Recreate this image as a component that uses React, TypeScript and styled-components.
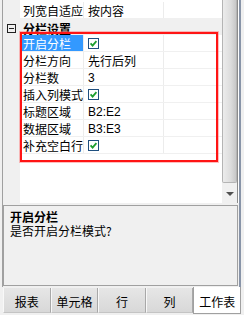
import React from 'react';
import styled, { createGlobalStyle } from 'styled-components';

const GlobalStyle = createGlobalStyle`
  html, body {
    margin: 0;
    padding: 0;
    background: #f0f0f0;
  }
  body {
    font-family: "Noto Sans CJK SC", "Liberation Sans", sans-serif;
    font-size: 12px;
    color: #000;
  }
`;

const Frame = styled.div`
  width: 244px;
  height: 315px;
  display: flex;
  flex-direction: column;
  overflow: hidden;
  background: #f0f0f0;
`;

const Panel = styled.div`
  margin-left: 2px;
  width: 239px;
  height: 287px;
  box-sizing: border-box;
  border-left: 1px solid #a0a0a0;
  border-right: 2px solid #8894a8;
  display: flex;
  flex-direction: column;
`;

const GridArea = styled.div`
  height: 203px;
  display: flex;
  background: #fff;
`;

const GridBody = styled.div`
  flex: 1;
  position: relative;
  overflow: hidden;
  padding-top: 2px;
  background: linear-gradient(to right, #f0f0f0 17px, #fff 17px);
`;

const Row = styled.div`
  display: flex;
  height: 17px;
  box-sizing: border-box;
  border-bottom: 1px solid #f0f0f0;
`;

const GroupRow = styled.div`
  display: flex;
  align-items: flex-start;
  height: 16px;
  background: #f0f0f0;
`;

const Expander = styled.span`
  position: relative;
  margin: 5px 4px 0 4px;
  width: 9px;
  height: 9px;
  box-sizing: border-box;
  border: 1px solid #222;
  &::after {
    content: '';
    position: absolute;
    left: 1px;
    top: 3px;
    width: 5px;
    height: 1px;
    background: #222;
  }
`;

const GroupTitle = styled.span`
  padding: 3px 0 0 3px;
  line-height: 13px;
  font-weight: bold;
`;

const Margin = styled.div`
  width: 17px;
  flex: none;
`;

const NameCell = styled.div<{ $selected?: boolean }>`
  width: 64px;
  flex: none;
  box-sizing: border-box;
  padding: 2px 0 0 3px;
  line-height: 14px;
  border-right: 1px solid #ececec;
  white-space: nowrap;
  overflow: hidden;
  background: ${(p) => (p.$selected ? '#3399ff' : 'transparent')};
  color: ${(p) => (p.$selected ? '#fff' : '#000')};
`;

const ValueCell = styled.div`
  width: 80px;
  flex: none;
  box-sizing: border-box;
  padding: 2px 0 0 4px;
  line-height: 14px;
  border-right: 1px solid #ececec;
  display: flex;
  align-items: flex-start;
  white-space: nowrap;
  font-family: "Liberation Sans", "Noto Sans CJK SC", sans-serif;
`;

const CjkText = styled.span`
  font-family: "Noto Sans CJK SC", sans-serif;
`;

const EmptyCell = styled.div`
  flex: 1;
`;

const Highlight = styled.div`
  position: absolute;
  left: 17px;
  top: 32px;
  width: 198px;
  height: 130px;
  box-sizing: border-box;
  border: 2px solid #ff1414;
  box-shadow: 0 0 0 1px rgba(255, 110, 110, 0.45);
  pointer-events: none;
`;

const ScrollCol = styled.div`
  width: 17px;
  flex: none;
  display: flex;
  flex-direction: column;
  padding-right: 1px;
  box-sizing: border-box;
  background: #fff;
`;

const ScrollTrack = styled.div`
  flex: 1;
  display: flex;
  flex-direction: column;
  background: #f0f0f0;
  border-right: 1px solid #8c8c8c;
`;

const Thumb = styled.div`
  height: 183px;
  box-sizing: border-box;
  border: 1px solid #b4b4b4;
  border-top: none;
  border-radius: 0 0 2px 2px;
  background: linear-gradient(to right, #ececec, #dcdcdc 60%, #c8c8c8);
`;

const ArrowButton = styled.div`
  margin-top: 3px;
  height: 17px;
  display: flex;
  align-items: center;
  justify-content: center;
`;

const Description = styled.div`
  margin: 2px 1px 0 0;
  height: 81px;
  box-sizing: border-box;
  border: 1px solid #a0a0a0;
  background: #f0f0f0;
  padding: 4px 0 0 6px;
  line-height: 14px;
`;

const DescTitle = styled.div`
  font-weight: bold;
`;

const TabStrip = styled.div`
  display: flex;
  margin-left: 3px;
  width: 238px;
  height: 28px;
`;

const Tab = styled.div<{ $active?: boolean }>`
  flex: 1;
  box-sizing: border-box;
  display: flex;
  align-items: center;
  justify-content: center;
  padding-top: 2px;
  margin-top: ${(p) => (p.$active ? '0' : '1px')};
  height: ${(p) => (p.$active ? '27px' : '25px')};
  background: ${(p) => (p.$active ? '#fff' : 'linear-gradient(#e6e6e6, #d8d8d8)')};
  border-left: 1px solid ${(p) => (p.$active ? '#a0a0a0' : '#f8f8f8')};
  border-right: 1px solid ${(p) => (p.$active ? '#a0a0a0' : '#a8a8a8')};
  border-bottom: 1px solid ${(p) => (p.$active ? '#a0a0a0' : '#c4c4c4')};
  font-size: 12px;
`;

function CheckBox() {
  return (
    <svg width="11" height="11" viewBox="0 0 11 11" style={{ marginTop: 1 }}>
      <rect x="0.5" y="0.5" width="10" height="10" fill="#fff" stroke="#1f4f7f" />
      <path d="M2.6 5.4 L4.6 7.6 L8.4 3.2" fill="none" stroke="#1e9e2e" strokeWidth="1.8" />
    </svg>
  );
}

type Prop = { name: string; value?: string; check?: boolean; selected?: boolean; cjk?: boolean };

const props: Prop[] = [
  { name: '开启分栏', check: true, selected: true },
  { name: '分栏方向', value: '先行后列', cjk: true },
  { name: '分栏数', value: '3' },
  { name: '插入列模式', check: true },
  { name: '标题区域', value: 'B2:E2' },
  { name: '数据区域', value: 'B3:E3' },
  { name: '补充空白行', check: true },
];

const tabs = ['报表', '单元格', '行', '列', '工作表'];

export default function App() {
  return (
    <Frame>
      <GlobalStyle />
      <Panel>
        <GridArea>
          <GridBody>
            <Row>
              <Margin />
              <NameCell>列宽自适应</NameCell>
              <ValueCell><CjkText>按内容</CjkText></ValueCell>
              <EmptyCell />
            </Row>
            <GroupRow>
              <Expander />
              <GroupTitle>分栏设置</GroupTitle>
            </GroupRow>
            {props.map((p) => (
              <Row key={p.name}>
                <Margin />
                <NameCell $selected={p.selected}>{p.name}</NameCell>
                <ValueCell>
                  {p.check ? <CheckBox /> : p.cjk ? <CjkText>{p.value}</CjkText> : p.value}
                </ValueCell>
                <EmptyCell />
              </Row>
            ))}
            <Highlight />
          </GridBody>
          <ScrollCol>
            <ScrollTrack>
              <Thumb />
              <ArrowButton>
                <svg width="8" height="5" viewBox="0 0 8 5">
                  <path d="M0 0 H8 L4 4 Z" fill="#505050" />
                </svg>
              </ArrowButton>
            </ScrollTrack>
          </ScrollCol>
        </GridArea>
        <Description>
          <DescTitle>开启分栏</DescTitle>
          <div>是否开启分栏模式?</div>
        </Description>
      </Panel>
      <TabStrip>
        {tabs.map((t) => (
          <Tab key={t} $active={t === '工作表'}>{t}</Tab>
        ))}
      </TabStrip>
    </Frame>
  );
}
